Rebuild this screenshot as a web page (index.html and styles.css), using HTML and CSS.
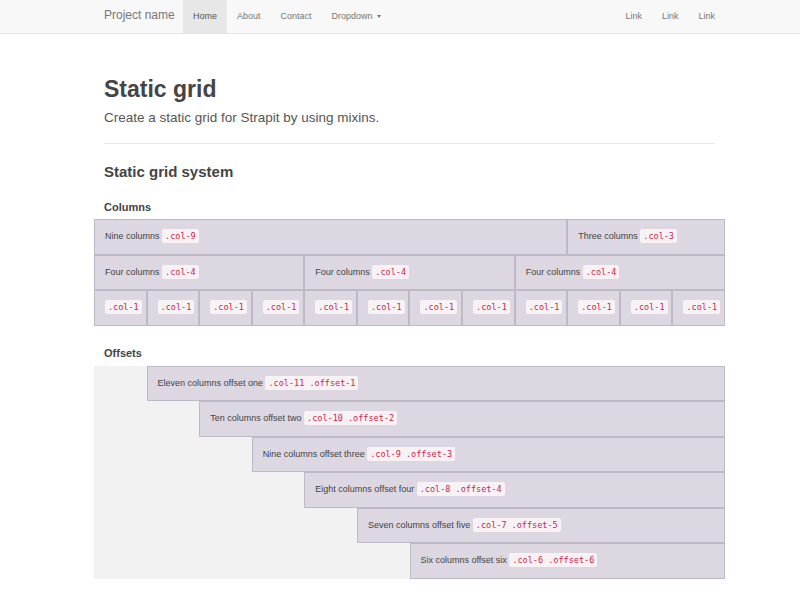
FILE: index.html
```html
<!DOCTYPE html>
<html>
<head>
<meta charset="utf-8">
<link rel="stylesheet" href="styles.css">
</head>
<body>
<div class="navbar">
  <div class="nav-inner">
    <div class="brand">Project name</div>
    <ul class="nav">
      <li class="active">Home</li>
      <li>About</li>
      <li>Contact</li>
      <li>Dropdown <span class="caret"></span></li>
    </ul>
    <ul class="nav nav-right">
      <li>Link</li>
      <li>Link</li>
      <li>Link</li>
    </ul>
  </div>
</div>
<div class="container">
  <div class="page-header">
    <h1>Static grid</h1>
    <p class="lead">Create a static grid for Strapit by using mixins.</p>
  </div>
  <h2>Static grid system</h2>
  <h3>Columns</h3>
  <div class="grid">
    <div class="row">
      <div class="cell span-9">Nine columns <code>.col-9</code></div>
      <div class="cell span-3">Three columns <code>.col-3</code></div>
    </div>
    <div class="row">
      <div class="cell span-4">Four columns <code>.col-4</code></div>
      <div class="cell span-4">Four columns <code>.col-4</code></div>
      <div class="cell span-4">Four columns <code>.col-4</code></div>
    </div>
    <div class="row">
      <div class="cell"><code>.col-1</code></div>
      <div class="cell"><code>.col-1</code></div>
      <div class="cell"><code>.col-1</code></div>
      <div class="cell"><code>.col-1</code></div>
      <div class="cell"><code>.col-1</code></div>
      <div class="cell"><code>.col-1</code></div>
      <div class="cell"><code>.col-1</code></div>
      <div class="cell"><code>.col-1</code></div>
      <div class="cell"><code>.col-1</code></div>
      <div class="cell"><code>.col-1</code></div>
      <div class="cell"><code>.col-1</code></div>
      <div class="cell"><code>.col-1</code></div>
    </div>
  </div>
  <h3 class="offsets-title">Offsets</h3>
  <div class="grid offsets">
    <div class="row"><div class="cell start-2 span-11">Eleven columns offset one <code>.col-11 .offset-1</code></div></div>
    <div class="row"><div class="cell start-3 span-10">Ten columns offset two <code>.col-10 .offset-2</code></div></div>
    <div class="row"><div class="cell start-4 span-9">Nine columns offset three <code>.col-9 .offset-3</code></div></div>
    <div class="row"><div class="cell start-5 span-8">Eight columns offset four <code>.col-8 .offset-4</code></div></div>
    <div class="row"><div class="cell start-6 span-7">Seven columns offset five <code>.col-7 .offset-5</code></div></div>
    <div class="row"><div class="cell start-7 span-6">Six columns offset six <code>.col-6 .offset-6</code></div></div>
  </div>
</div>
</body>
</html>
```
FILE: styles.css
```css
* { box-sizing: border-box; }
html, body { margin: 0; padding: 0; background: #fff; }
body {
  font-family: "Liberation Sans", Arial, sans-serif;
  color: #333;
}
.navbar {
  height: 34px;
  background: #f8f8f8;
  border-bottom: 1px solid #e4e4e4;
}
.nav-inner {
  margin-left: 94px;
  width: 631px;
  padding-left: 10px;
  height: 33px;
  display: flex;
}
.brand {
  font-size: 12px;
  color: #777;
  line-height: 31px;
  width: 79px;
}
.nav {
  list-style: none;
  margin: 0;
  padding: 0;
  display: flex;
  font-size: 9px;
  color: #777;
}
.nav li {
  padding: 0 10px;
  line-height: 33px;
}
.nav li.active {
  background: #e7e7e7;
  color: #555;
}
.nav-right { margin-left: auto; }
.caret {
  display: inline-block;
  width: 0;
  height: 0;
  margin-left: 2px;
  vertical-align: middle;
  border-top: 3px solid #777;
  border-left: 2.5px solid transparent;
  border-right: 2.5px solid transparent;
}
.container {
  margin-left: 94px;
  width: 631px;
}
.page-header {
  margin: 0 10px;
  padding-top: 40px;
  padding-bottom: 16px;
  border-bottom: 1px solid #e9e9e9;
}
h1 {
  margin: 0;
  font-size: 23px;
  line-height: 30px;
  color: #444;
  font-weight: bold;
}
.lead {
  margin: 5px 0 0;
  font-size: 13.5px;
  line-height: 18px;
  color: #555;
}
h2 {
  margin: 18px 10px 0;
  font-size: 15px;
  line-height: 20px;
  color: #444;
  font-weight: bold;
}
h3 {
  margin: 18px 10px 0;
  font-size: 11px;
  line-height: 14px;
  color: #444;
  font-weight: bold;
}
.offsets-title { margin-top: 20px; }
.grid {
  margin-top: 5px;
}
.row {
  display: grid;
  grid-template-columns: repeat(12, 1fr);
  height: 35.67px;
}
.offsets { margin-top: 6px; background: #f2f2f2; }
.offsets .row { height: 35.5px; }
.cell {
  background: #dcd7e0;
  border: 1px solid #bfb9c5;
  font-size: 9px;
  line-height: 33px;
  color: #444;
  padding: 0 10px;
  white-space: nowrap;
  overflow: hidden;
}
.span-3 { grid-column-end: span 3; }
.span-4 { grid-column-end: span 4; }
.span-6 { grid-column-end: span 6; }
.span-7 { grid-column-end: span 7; }
.span-8 { grid-column-end: span 8; }
.span-9 { grid-column-end: span 9; }
.span-10 { grid-column-end: span 10; }
.span-11 { grid-column-end: span 11; }
.start-2 { grid-column-start: 2; }
.start-3 { grid-column-start: 3; }
.start-4 { grid-column-start: 4; }
.start-5 { grid-column-start: 5; }
.start-6 { grid-column-start: 6; }
.start-7 { grid-column-start: 7; }
code {
  font-family: "DejaVu Sans Mono", "Liberation Mono", monospace;
  font-size: 8.5px;
  color: #c7254e;
  background: #f9f2f4;
  padding: 2px 3px;
  line-height: 10px;
  border-radius: 2px;
}
```
